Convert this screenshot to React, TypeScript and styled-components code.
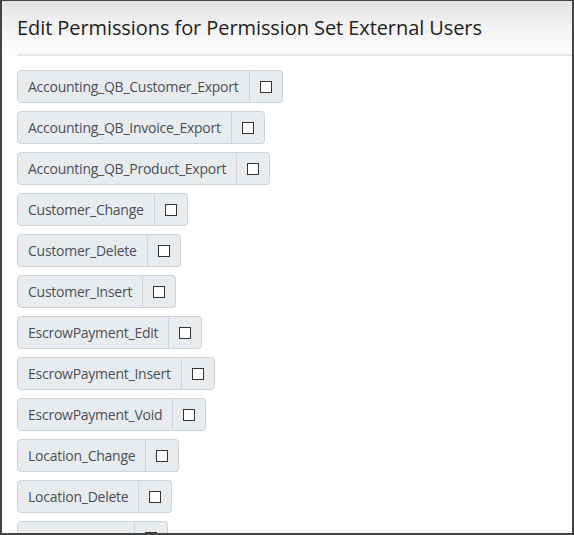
import styled, { createGlobalStyle } from "styled-components";

const GlobalStyle = createGlobalStyle`
    html, body {
        margin: 0;
        padding: 0;
        background: #ffffff;
    }
    * {
        box-sizing: border-box;
    }
`;

const Frame = styled.div`
    width: 574px;
    height: 535px;
    overflow: hidden;
    border: 2px solid #444444;
    border-top-width: 1px;
    background: #ffffff;
    font-family: "Open Sans", "Noto Sans", sans-serif;
`;

const Header = styled.div`
    height: 55px;
    padding: 0 0 0 15px;
    display: flex;
    flex-direction: column;
    justify-content: flex-end;
    background: linear-gradient(to bottom, #e4e4e4 0%, #f6f6f6 60%, #fcfcfc 100%);
`;

const Title = styled.h1`
    margin: 0;
    flex: 1;
    display: flex;
    align-items: center;
    font-size: 20px;
    font-weight: 400;
    letter-spacing: -0.08px;
    color: #222222;
`;

const Divider = styled.div`
    height: 2px;
    background: #e6e6e6;
`;

const List = styled.div`
    padding: 14px 15px 0;
    display: flex;
    flex-direction: column;
    align-items: flex-start;
    gap: 8px;
`;

const Group = styled.div`
    display: flex;
    height: 33px;
`;

const Label = styled.span`
    display: flex;
    align-items: center;
    padding: 0 10px;
    font-size: 14px;
    letter-spacing: -0.25px;
    color: #495057;
    background: #e9ecef;
    border: 1px solid #ced4da;
    border-radius: 4px 0 0 4px;
`;

const Addon = styled.span`
    display: flex;
    align-items: center;
    padding: 0 10px;
    background: #e9ecef;
    border: 1px solid #ced4da;
    border-left: none;
    border-radius: 0 4px 4px 0;
`;

const Box = styled.span`
    width: 12px;
    height: 12px;
    border: 1px solid #333333;
    background: #ffffff;
`;

const permissions = [
    "Accounting_QB_Customer_Export",
    "Accounting_QB_Invoice_Export",
    "Accounting_QB_Product_Export",
    "Customer_Change",
    "Customer_Delete",
    "Customer_Insert",
    "EscrowPayment_Edit",
    "EscrowPayment_Insert",
    "EscrowPayment_Void",
    "Location_Change",
    "Location_Delete",
    "Location_Insert",
];

const App = () => (
    <>
        <GlobalStyle />
        <Frame>
            <Header>
                <Title>Edit Permissions for Permission Set External Users</Title>
                <Divider />
            </Header>
            <List>
                {permissions.map((p) => (
                    <Group key={p}>
                        <Label>{p}</Label>
                        <Addon>
                            <Box />
                        </Addon>
                    </Group>
                ))}
            </List>
        </Frame>
    </>
);

export default App;
